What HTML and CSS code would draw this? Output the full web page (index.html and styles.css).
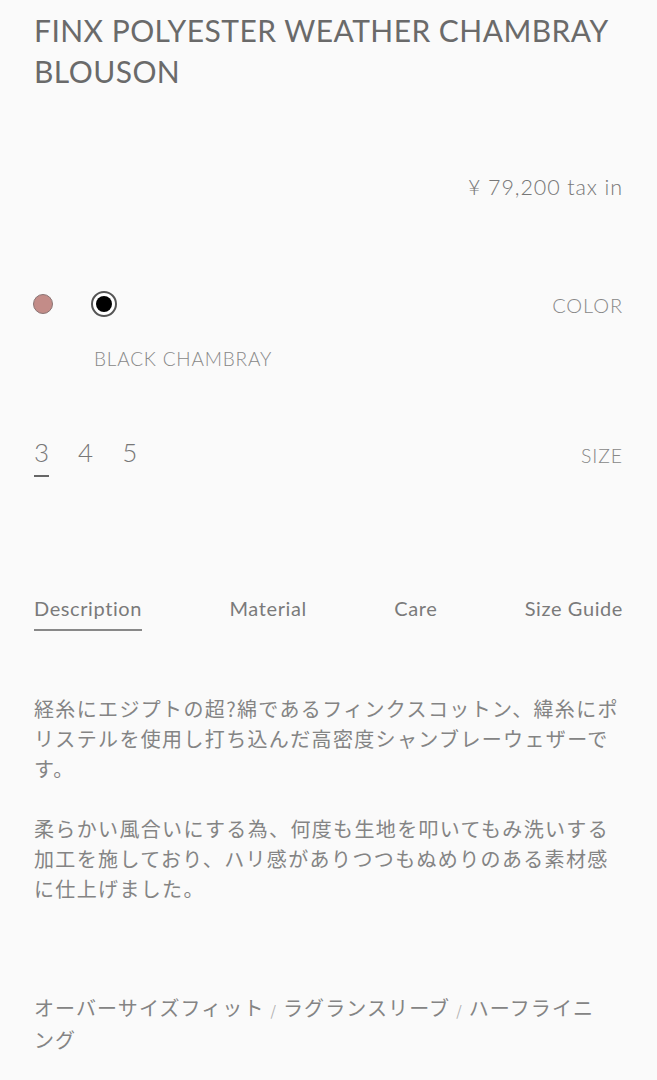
FILE: index.html
```html
<!DOCTYPE html>
<html lang="ja">
<head>
<meta charset="utf-8">
<title>FINX POLYESTER WEATHER CHAMBRAY BLOUSON</title>
<link rel="stylesheet" href="styles.css">
</head>
<body>
<main class="page">
  <h1 class="title">FINX POLYESTER WEATHER CHAMBRAY BLOUSON</h1>
  <p class="price">¥ 79,200 tax in</p>

  <section class="option option-color">
    <div class="option-main">
      <div class="swatches">
        <span class="swatch swatch-pink"></span>
        <span class="swatch swatch-black is-active"><span class="swatch-dot"></span></span>
      </div>
      <p class="color-name">BLACK CHAMBRAY</p>
    </div>
    <span class="option-label">COLOR</span>
  </section>

  <section class="option option-size">
    <div class="sizes">
      <span class="size is-active">3</span>
      <span class="size">4</span>
      <span class="size">5</span>
    </div>
    <span class="option-label">SIZE</span>
  </section>

  <nav class="tabs">
    <span class="tab is-active">Description</span>
    <span class="tab">Material</span>
    <span class="tab">Care</span>
    <span class="tab">Size Guide</span>
  </nav>

  <div class="description">
    <p>経糸にエジプトの超?綿であるフィンクスコットン、緯糸にポリステルを使用し打ち込んだ高密度シャンブレーウェザーです。</p>
    <p>柔らかい風合いにする為、何度も生地を叩いてもみ洗いする加工を施しており、ハリ感がありつつもぬめりのある素材感に仕上げました。</p>
    <p class="features">オーバーサイズフィット<span class="sep">/</span>ラグランスリーブ<span class="sep">/</span>ハーフライニング</p>
  </div>
</main>
</body>
</html>
```

FILE: styles.css
```css
html, body {
  margin: 0;
  padding: 0;
  background: #fafafa;
}

.page {
  padding: 0 34px;
  width: 589px;
}

.title {
  margin: 0;
  padding-top: 10px;
  font-family: "Lato", "Liberation Sans", sans-serif;
  font-weight: 400;
  font-size: 30px;
  line-height: 41px;
  letter-spacing: 0.45px;
  color: #6a6a6a;
}

.price {
  margin: 83px 0 0;
  text-align: right;
  font-family: "Lato", "Liberation Sans", sans-serif;
  font-weight: 300;
  font-size: 21.5px;
  line-height: 24px;
  letter-spacing: 0.9px;
  color: #777;
}

.option {
  display: flex;
  justify-content: space-between;
  align-items: flex-start;
}

.option-label {
  font-family: "Lato", "Liberation Sans", sans-serif;
  font-weight: 300;
  font-size: 20px;
  line-height: 24px;
  letter-spacing: 0.9px;
  color: #888;
}

.option-color {
  margin-top: 92px;
}

.option-color .option-label {
  margin-top: 2px;
}

.swatches {
  display: flex;
  align-items: center;
  gap: 38px;
  height: 26px;
}

.swatch {
  box-sizing: border-box;
  display: block;
  border-radius: 50%;
}

.swatch-pink {
  width: 20px;
  height: 20px;
  margin-left: -1px;
  background: #c38c88;
  border: 1.5px solid #8a7474;
}

.swatch-black {
  width: 26px;
  height: 26px;
  border: 2px solid #555;
  background: #fff;
  display: flex;
  align-items: center;
  justify-content: center;
}

.swatch-dot {
  width: 16px;
  height: 16px;
  border-radius: 50%;
  background: #000;
}

.color-name {
  margin: 30px 0 0 60px;
  font-family: "Lato", "Liberation Sans", sans-serif;
  font-weight: 300;
  font-size: 19px;
  line-height: 24px;
  letter-spacing: 0.8px;
  color: #888;
}

.option-size {
  margin-top: 66px;
}

.option-size .option-label {
  margin-top: 7px;
  font-size: 19.5px;
}

.sizes {
  display: flex;
  gap: 29px;
}

.size {
  font-family: "Lato", "Liberation Sans", sans-serif;
  font-weight: 300;
  font-size: 26px;
  line-height: 30px;
  color: #777;
  padding-bottom: 8px;
  border-bottom: 2px solid transparent;
}

.size.is-active {
  border-bottom-color: #666;
}

.tabs {
  display: flex;
  justify-content: space-between;
  margin-top: 119px;
}

.tab {
  font-family: "Lato", "Liberation Sans", sans-serif;
  font-weight: 400;
  font-size: 20px;
  line-height: 24px;
  letter-spacing: 0.6px;
  color: #7a7a7a;
  padding-bottom: 9px;
  border-bottom: 2px solid transparent;
}

.tab.is-active {
  border-bottom-color: #888;
}

.description {
  margin-top: 63px;
  font-family: "Noto Sans CJK JP", sans-serif;
  font-size: 20px;
  line-height: 30px;
  letter-spacing: 1.35px;
  color: #848484;
}

.description p {
  margin: 0 0 30px;
}

.description .features {
  margin-top: 89px;
  max-width: 575px;
  letter-spacing: 1.1px;
}

.sep {
  display: inline-block;
  margin: 0 7px 0 6px;
  color: #b0b0b0;
  font-size: 14px;
  letter-spacing: 0;
}
```
